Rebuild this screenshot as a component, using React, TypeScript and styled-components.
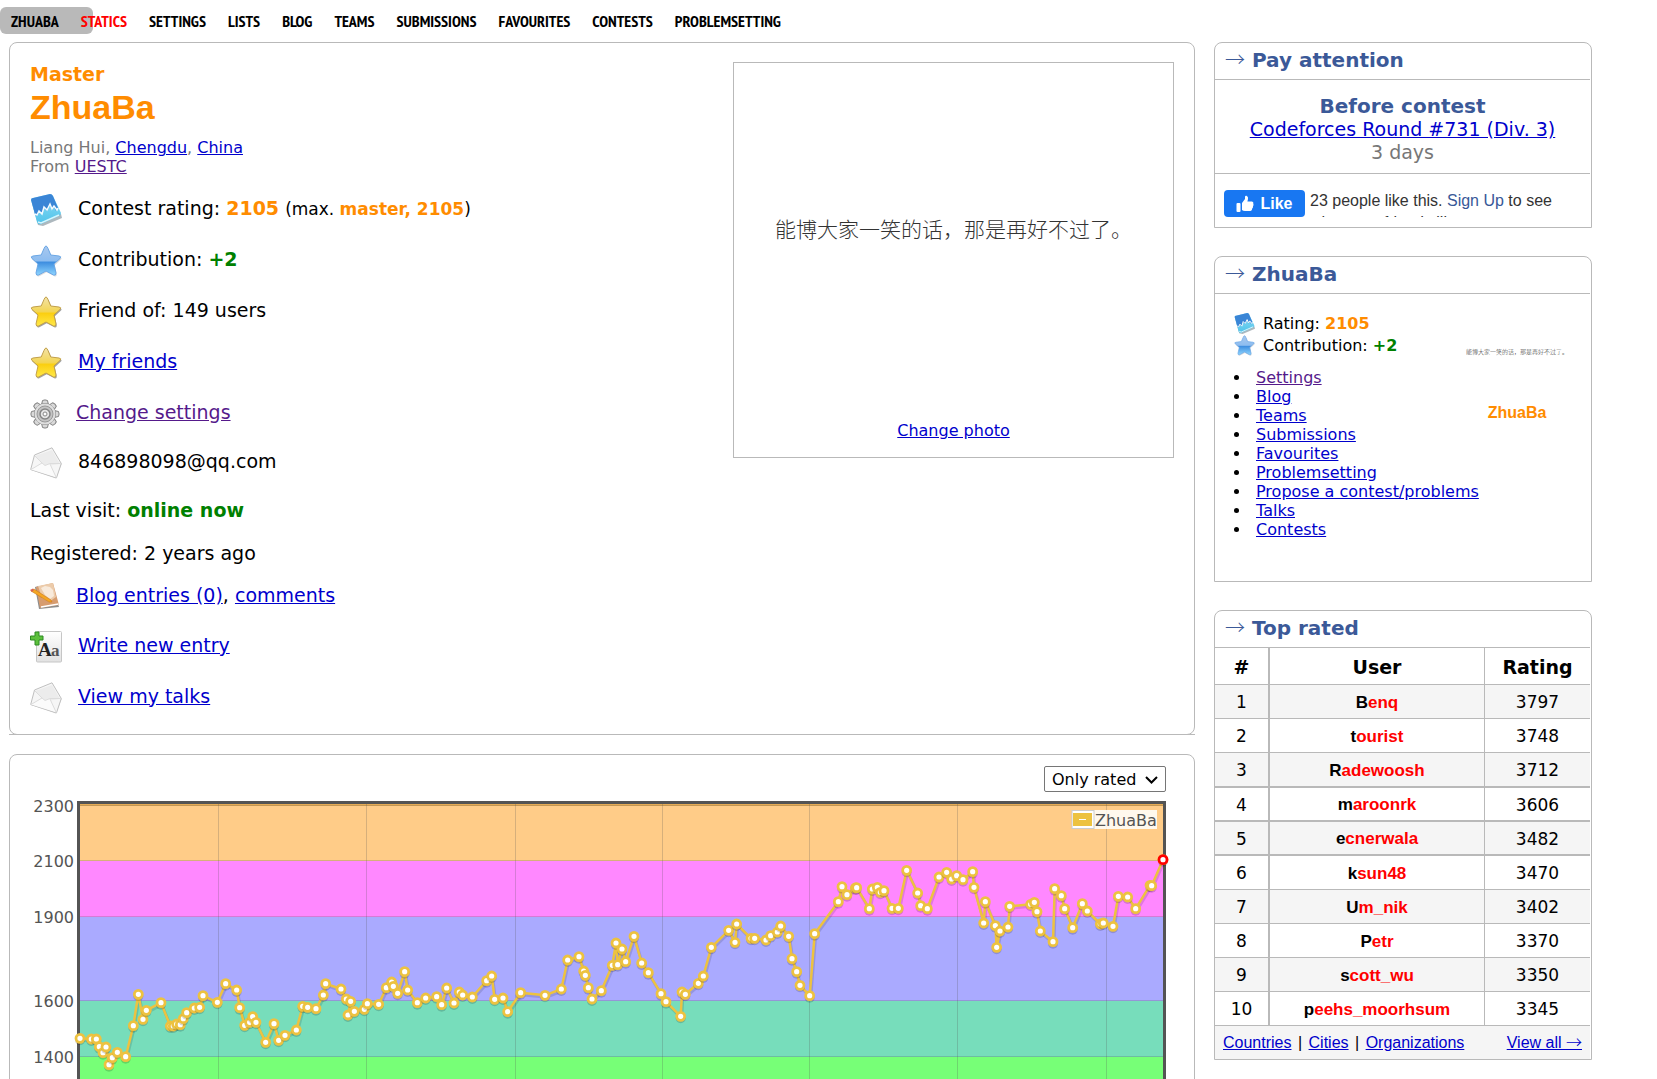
import React from 'react';
import styled, { createGlobalStyle } from 'styled-components';

const LINE = '#b9b9b9';
const LINK = '#0000cc';
const VISITED = '#551a8b';
const ORANGE = '#ff8c00';
const VERDANA = 'Verdana, "DejaVu Sans", sans-serif';
const ARIAL = 'Arial, "Liberation Sans", sans-serif';

const GlobalStyle = createGlobalStyle`
  *, *::before, *::after { box-sizing: border-box; }
  body { margin: 0; background: #fff; color: #000; font-family: ${VERDANA}; font-size: 16px; }
  ul, h1, h2, p { margin: 0; padding: 0; }
`;

const Page = styled.div`
  height: 100vh;
  overflow: hidden;
`;

const Link = styled.a<{ $visited?: boolean }>`
  color: ${(p) => (p.$visited ? VISITED : LINK)};
  text-decoration: underline;
`;

/* ---------- top menu ---------- */

const Nav = styled.nav`
  position: relative;
  display: flex;
  align-items: center;
  gap: 22px;
  height: 42px;
  padding-left: 11px;
`;

const NavMarker = styled.span`
  position: absolute;
  left: 0;
  top: 7px;
  width: 93px;
  height: 27px;
  border-radius: 6px;
  background: ${LINE};
`;

const NavLink = styled.a<{ $hot?: boolean }>`
  position: relative;
  color: ${(p) => (p.$hot ? '#ff0000' : '#000')};
  font: bold 16px/20px "PT Sans Narrow", "Liberation Sans Narrow", "Roboto Condensed", sans-serif;
  text-decoration: none;
  text-transform: uppercase;
`;

/* ---------- page columns ---------- */

const Columns = styled.div`
  display: grid;
  grid-template-columns: minmax(0, 1fr) 378px;
  column-gap: 19px;
  align-items: start;
  padding: 0 65px 0 9px;
`;

const Stack = styled.div<{ $gap: number }>`
  display: flex;
  flex-direction: column;
  gap: ${(p) => p.$gap}px;
`;

const RuledBox = styled.section`
  border-bottom: 1px solid ${LINE};
`;

const ProfileCard = styled.div`
  display: flex;
  justify-content: space-between;
  align-items: flex-start;
  margin-bottom: -1px;
  padding: 19px 20px 13px;
  border: 1px solid ${LINE};
  border-radius: 8px;
`;

const Rank = styled.p`
  color: ${ORANGE};
  font-size: 19px;
  font-weight: bold;
  line-height: 24px;
`;

const Handle = styled.h1`
  color: ${ORANGE};
  font: bold 34px/42px ${ARIAL};
`;

const Details = styled.p`
  padding: 10px 0 6px;
  color: #777;
  font-size: 16px;
  line-height: 19px;
`;

const Fact = styled.div<{ $height: number }>`
  display: flex;
  align-items: center;
  gap: 16px;
  height: ${(p) => p.$height}px;
  font-size: 19px;

  svg { flex: none; margin-top: 4px; }
`;

const Strong = styled.b<{ $color: string }>`
  color: ${(p) => p.$color};
`;

const Small = styled.span`
  font-size: 17px;
`;

const Photo = styled.figure`
  display: flex;
  flex-direction: column;
  align-items: center;
  width: 441px;
  height: 396px;
  margin: 0;
  padding-bottom: 16px;
  border: 1px solid ${LINE};
`;

const PhotoImage = styled.div<{ $size: number; $height: number }>`
  display: flex;
  align-items: center;
  justify-content: center;
  height: ${(p) => p.$height}px;
  color: #333;
  font: 300 ${(p) => p.$size}px/1 "Noto Sans CJK SC", sans-serif;
  white-space: nowrap;
`;

const PhotoCaption = styled.figcaption`
  margin-top: auto;
  line-height: 20px;
`;

/* ---------- rating chart ---------- */

const ChartCard = styled.section`
  display: flex;
  flex-direction: column;
  align-items: flex-end;
  gap: 8px;
  padding: 11px 28px 20px 20px;
  border: 1px solid ${LINE};
  border-radius: 8px;
`;

const FilterBox = styled.div`
  position: relative;
  height: 26px;

  svg { position: absolute; right: 8px; top: 10px; pointer-events: none; }
`;

const Filter = styled.select`
  appearance: none;
  width: 122px;
  height: 26px;
  padding: 0 24px 0 7px;
  border: 1px solid #767676;
  border-radius: 2px;
  background-color: #fff;
  color: #000;
  font: 16px ${VERDANA};
`;

const Chart = styled.svg`
  display: block;
  width: 100%;
  height: auto;
  overflow: visible;
  font: 16px ${VERDANA};
`;

const BANDS = [
  { y: 64, h: 2, color: '#ffbb55' },
  { y: 66, h: 55, color: '#ffcc88' },
  { y: 121, h: 56, color: '#ff88ff' },
  { y: 177, h: 84, color: '#aaaaff' },
  { y: 261, h: 56, color: '#77ddbb' },
  { y: 317, h: 83, color: '#77ff77' },
];
const LEVELS = [
  { label: '2300', y: 66 },
  { label: '2100', y: 121 },
  { label: '1900', y: 177 },
  { label: '1600', y: 261 },
  { label: '1400', y: 317 },
];
const MONTHS = [218, 366, 515, 662, 809, 957, 1106];

// Rating history, three units to one chart pixel.
const HISTORY = `240,895 274,897 289,897 298,920 309,938 318,921 327,974 337,953 352,937 377,950 400,857 415,763
429,838 439,811 483,788 511,858 520,858 530,852 541,854 550,836 560,818 583,804 599,802 609,767 652,787 677,731
710,750 719,803 734,856 749,847 758,830 768,847 797,907 822,851 836,901 855,886 889,870 908,799 923,802 948,806
970,765 977,731 1023,747 1039,777 1052,784 1044,825 1063,814 1093,808 1102,791 1136,793 1159,743 1175,726
1180,739 1193,760 1214,695 1223,750 1252,788 1277,774 1310,770 1325,794 1340,744 1362,789 1378,756 1388,765
1417,771 1460,722 1475,708 1484,778 1509,774 1523,815 1562,758 1635,766 1684,747 1703,660 1737,650 1751,693
1756,706 1765,743 1776,777 1804,752 1837,676 1848,609 1853,674 1866,627 1877,665 1902,589 1925,669 1945,698
1983,761 1998,785 2042,829 2046,756 2056,763 2095,730 2110,708 2134,622 2186,571 2205,607 2210,552 2253,595
2264,595 2298,600 2312,587 2332,576 2342,558 2366,589 2376,656 2390,695 2400,736 2429,767 2444,581 2515,485
2526,440 2541,464 2566,444 2570,443 2608,506 2617,447 2632,442 2641,457 2652,452 2676,505 2695,505 2720,391
2753,459 2762,497 2782,506 2817,411 2840,397 2855,417 2870,407 2889,419 2918,395 2922,442 2951,549 2956,485
2986,557 2990,622 3000,573 3024,561 3029,499 3092,493 3103,487 3111,515 3121,573 3159,605 3164,446 3184,467
3194,506 3218,563 3247,491 3262,513 3301,552 3310,549 3339,559 3355,469 3383,471 3407,506 3450,436 3455,437
3489,359`
  .split(/\s+/)
  .map((pair) => pair.split(',').map((n) => Number(n) / 3));

function RatingChart() {
  const path = HISTORY.map(([x, y]) => `${x.toFixed(1)},${y.toFixed(1)}`).join(' ');
  const last = HISTORY[HISTORY.length - 1];
  return (
    <Chart viewBox="30 60 1136 340" role="img" aria-label="Rating history of ZhuaBa">
      {BANDS.map((b) => (
        <rect key={b.y} x="78" y={b.y} width="1087" height={b.h} fill={b.color} />
      ))}
      <g fill="#545454" fillOpacity="0.24">
        {LEVELS.map((l) => (
          <rect key={l.label} x="80" y={l.y - 1} width="1083" height="1" />
        ))}
        {MONTHS.map((x) => (
          <rect key={x} x={x} y="64" width="1" height="336" />
        ))}
      </g>
      <rect x="80" y="64" width="1083" height="2" fill="#545454" fillOpacity="0.14" />
      <path d="M78.5 400V62.5H1164.5V400" fill="none" stroke="#545454" strokeWidth="3" />
      <g fill="#545454" textAnchor="end">
        {LEVELS.map((l) => (
          <text key={l.label} x="74" y={l.y + 6}>{l.label}</text>
        ))}
      </g>
      <g fill="none" strokeLinejoin="round">
        <polyline points={path} stroke="#000" strokeOpacity="0.12" strokeWidth="3" transform="translate(1 2)" />
        <polyline points={path} stroke="#edc240" strokeWidth="2.5" />
      </g>
      {HISTORY.map(([x, y], i) => (
        <g key={i}>
          <circle cx={x} cy={y + 2} r="5" fill="#000" fillOpacity="0.16" />
          <circle cx={x} cy={y} r="4" fill="#fff" stroke="#edc240" strokeWidth="2.8" />
        </g>
      ))}
      <circle cx={last[0]} cy={last[1]} r="4" fill="#fff" stroke="#f00" strokeWidth="2.8" />
      <rect x="1072" y="70" width="85" height="19" fill="#fff" fillOpacity="0.85" />
      <rect x="1072" y="70.5" width="22" height="18" fill="#fff" stroke="#ccc" />
      <rect x="1073" y="73" width="19" height="13" fill="#edc240" />
      <rect x="1079" y="79" width="7" height="1" fill="#fff" />
      <text x="1095" y="86" fill="#545454">ZhuaBa</text>
    </Chart>
  );
}

/* ---------- sidebar ---------- */

const Panel = styled.section`
  padding-right: 1px;
  border: 1px solid ${LINE};
  border-radius: 8px 8px 0 0;
`;

const PanelTitle = styled.h2`
  height: 37px;
  padding-left: 10px;
  border-bottom: 1px solid ${LINE};
  color: #3b5998;
  font-size: 20px;
  line-height: 34px;
`;

const Arrow = styled.span`
  font-family: "Noto Sans CJK SC", sans-serif;
  font-weight: 300;
  line-height: 1;
`;

const Countdown = styled.div`
  padding: 15px 0 9px;
  border-bottom: 1px solid ${LINE};
  color: #777;
  font-size: 19px;
  line-height: 23px;
  text-align: center;

  strong { display: block; color: #3b5998; font-size: 20px; }
`;

const Social = styled.div`
  display: flex;
  gap: 5px;
  padding: 16px 9px 10px;
`;

const LikeButton = styled.button`
  display: flex;
  flex: none;
  align-items: center;
  justify-content: center;
  gap: 6px;
  width: 81px;
  height: 27px;
  padding: 0;
  border: 0;
  border-radius: 4px;
  background: #1877f2;
  color: #fff;
  font: bold 16px ${ARIAL};
`;

const SocialText = styled.p`
  height: 27px;
  max-width: 260px;
  overflow: hidden;
  color: #333;
  font: 16px/22px ${ARIAL};

  a { color: #385898; text-decoration: none; }
`;

const UserBody = styled.div`
  padding: 8px 22px 42px 0;
`;

const Avatar = styled.div`
  float: right;
  width: 102px;
  text-align: center;
`;

const AvatarName = styled.a`
  display: block;
  color: ${ORANGE};
  font: bold 16px/22px ${ARIAL};
  text-decoration: none;
`;

const Summary = styled.div`
  padding: 10px 0 12px 19px;
`;

const SummaryRow = styled.div`
  display: flex;
  align-items: center;
  gap: 8px;
  height: 22px;

  svg { flex: none; }
`;

const LinkList = styled.ul`
  padding-left: 36px;
  line-height: 19px;

  li { padding-left: 5px; }
`;

const RatingTable = styled.table`
  width: 100%;
  border-spacing: 0;
  table-layout: fixed;
  text-align: center;

  th, td {
    height: 34px;
    padding: 1px 0 0;
    border-bottom: 1px solid ${LINE};
    border-right: 1px solid ${LINE};
  }
  th { height: 37px; padding-top: 2px; font-size: 19px; }
  td { font-size: 17px; }
  th:first-child, td:first-child { width: 55px; border-right-width: 2px; }
  th:last-child, td:last-child { width: 105px; border-right: 0; }
  tbody tr:nth-child(odd) { background: #f5f5f5; }
  tbody tr:nth-child(3) td { height: 35px; }
  tbody tr:nth-child(n + 3):nth-child(-n + 5) td { border-bottom-width: 2px; }
`;

const User = styled.a`
  display: inline-block;
  color: #f00;
  font: bold 17px/20px ${ARIAL};
  text-decoration: none;

  &::first-letter { color: #000; }
`;

const TableFooter = styled.div`
  display: flex;
  justify-content: space-between;
  height: 33px;
  padding: 0 8px;
  background: #f5f5f5;
  font: 16px/33px ${ARIAL};
`;

const Divider = styled.span`
  margin: 0 2px;
`;

/* ---------- icons ---------- */

const RatingIcon = ({ size = 32 }: { size?: number }) => (
  <svg width={size} height={size} viewBox="0 0 32 32" aria-hidden="true">
    <defs>
      <linearGradient id="ice" x1="0" y1="0" x2="0" y2="1">
        <stop offset="0" stopColor="#8fdcf5" />
        <stop offset="1" stopColor="#4fc3ea" />
      </linearGradient>
    </defs>
    <path d="M2 9 8 31 13 32 32 24 31 20Z" fill="#8a9aa2" opacity=".7" />
    <path d="M1 6Q1 4 3 4L20 0Q22 0 23 2L31 19Q31 21 29 22L11 30Q8 31 7 28Z" fill="url(#ice)" />
    <path d="M1 6Q1 4 3 4L20 0Q22 0 23 2L28 14 26 17 24 13 22 16 20 11 17 17 14 14 12 20 9 18 7 22 5 20Z" fill="#3a85d6" />
    <path d="m5 20 2 1 2-4 3 3 2-7 3 3 3-6 2 5 2-3 3 4 1-2" fill="none" stroke="#f4fbff" strokeWidth="1.5" />
    <path d="m8 28 3 1 18-8" fill="none" stroke="#d6f5fd" strokeWidth="1.5" />
  </svg>
);

const STAR = 'M16 1Q17 1 18 3.500L20.800 10 29 11Q32 11.500 30 13.500L24 19 26 28Q26 31 23.500 30L16 26 8.500 30Q6 31 6 28L8 19 2 13.500Q0 11.500 3 11L11.200 10 14 3.500Q15 1 16 1Z';

const StarIcon = ({ blue, size = 32 }: { blue?: boolean; size?: number }) => {
  const id = blue ? 'starBlue' : 'starGold';
  return (
    <svg width={size} height={size} viewBox="0 0 32 32" aria-hidden="true">
      <defs>
        <linearGradient id={id} x1="0" y1="0" x2="0" y2="1">
          <stop offset="0" stopColor={blue ? '#a9c8ee' : '#f3e3a8'} />
          <stop offset=".5" stopColor={blue ? '#8dbdf0' : '#f3d553'} />
          <stop offset=".56" stopColor={blue ? '#3f8fe0' : '#fbcf10'} />
          <stop offset="1" stopColor={blue ? '#8fd6ff' : '#ffe94a'} />
        </linearGradient>
      </defs>
      <path d={STAR} fill="#555" opacity={blue ? 0.2 : 0.55} transform="translate(.8 1.300)" />
      <path d={STAR} fill={`url(#${id})`} stroke={blue ? '#6aa7e6' : '#c2a04a'} strokeWidth="1" />
    </svg>
  );
};

const GearIcon = () => (
  <svg width="30" height="30" viewBox="0 0 30 30" aria-hidden="true">
    <g fill="#d9d9d9" stroke="#848484">
      {[0, 45, 90, 135, 180, 225, 270, 315].map((a) => (
        <path key={a} d="M11.500 6 12.500 1.500Q15 .300 17.500 1.500L18.500 6Z" transform={`rotate(${a} 15 15)`} />
      ))}
      <circle cx="15" cy="15" r="10.500" />
    </g>
    <circle cx="15" cy="15" r="10.500" fill="#dedede" />
    <circle cx="15" cy="15" r="8" fill="#c4c4c4" stroke="#999" />
    <circle cx="15" cy="15" r="5" fill="#e6e6e6" stroke="#858585" strokeWidth="1.500" />
    <circle cx="15" cy="15" r="2" fill="#fff" stroke="#888" />
  </svg>
);

const MailIcon = () => (
  <svg width="32" height="32" viewBox="0 0 32 32" aria-hidden="true">
    <path d="M1 23 26 31.500 31.500 17 30 16Z" fill="#999" opacity=".5" />
    <path d="M.700 22.500 4.500 8 22 .800 31.300 16.500 26.500 30.800Z" fill="#f6f6f6" stroke="#bfbfbf" />
    <path d="M5 9 22 3 30 17 20 18.500 15 19Z" fill="#ececec" />
    <path d="M1 22.500 12 16 15 18.500 20 16.500 26.500 30.500Z" fill="#fbfbfb" />
    <path d="M5 9 12 16 15 18.500 20 16.500 31 16.500M12 16 1 22.500M20 17 26 30" fill="none" stroke="#dcdcdc" />
  </svg>
);

const BlogIcon = () => (
  <svg width="30" height="30" viewBox="0 0 30 30" aria-hidden="true">
    <path d="M5 5 9 27 29 25 28 22 12 24 9 4Z" fill="#8d8d8d" />
    <path d="M6 5 23 1 29 23 10 26Z" fill="#d79c6f" />
    <path d="M8 4 23 1 26 15 19 20 12 16Z" fill="#eccbaa" />
    <path d="M11 6 15 4 20 5 23 8 24 14 20 17 15 13Z" fill="#f8eadb" />
    <path d="M11 25 28.500 22" stroke="#fff" strokeWidth="1.500" />
    <path d="M1 9 4 7 21 18 22 20 19 20Z" fill="#f5a623" stroke="#c9781b" strokeWidth=".600" />
    <path d="M0 8 3 6.500 4 8 2 10Z" fill="#d9634f" />
  </svg>
);

const EntryIcon = () => (
  <svg width="32" height="32" viewBox="0 0 32 32" aria-hidden="true">
    <defs>
      <linearGradient id="sheet" x1="0" y1="0" x2="0" y2="1">
        <stop offset="0" stopColor="#fff" />
        <stop offset="1" stopColor="#e2e2e2" />
      </linearGradient>
    </defs>
    <rect x="6.500" y=".500" width="25" height="30.500" rx="1" fill="url(#sheet)" stroke="#c6c6c6" />
    <text x="8" y="25" fill="#222" fontFamily='"Liberation Serif", serif' fontWeight="bold" fontSize="19">A</text>
    <text x="21" y="25" fill="#555" fontFamily='"Liberation Serif", serif' fontWeight="bold" fontSize="17">a</text>
    <path d="M5 1H9V5H13V9H9V14H5V9H.500V5H5Z" fill="#5cc03c" stroke="#2c8a22" />
  </svg>
);

const ThumbIcon = () => (
  <svg width="18" height="18" viewBox="0 0 18 18" fill="#fff" aria-hidden="true">
    <rect x=".500" y="8" width="4" height="9" rx="1" />
    <path d="M6 8 9 4V2Q9 .500 10.500 .800 12.500 1.500 12 4L11.400 6.500H16Q17.800 7 17.300 8.700 18 10 17 11.200 17.300 12.600 16.200 13.600 16.200 15.800 14.400 16H9Q7 16 6 15Z" />
  </svg>
);

const ChevronIcon = () => (
  <svg width="13" height="8" viewBox="0 0 13 8" fill="none" stroke="#000" strokeWidth="2" aria-hidden="true">
    <path d="m1 1 5.500 5.500L12 1" />
  </svg>
);

/* ---------- content ---------- */

const MENU = ['Zhuaba', 'Statics', 'Settings', 'Lists', 'Blog', 'Teams', 'Submissions', 'Favourites', 'Contests', 'Problemsetting'];
const USER_LINKS = ['Settings', 'Blog', 'Teams', 'Submissions', 'Favourites', 'Problemsetting', 'Propose a contest/problems', 'Talks', 'Contests'];
const TOP: [string, number][] = [
  ['Benq', 3797],
  ['tourist', 3748],
  ['Radewoosh', 3712],
  ['maroonrk', 3606],
  ['ecnerwala', 3482],
  ['ksun48', 3470],
  ['Um_nik', 3402],
  ['Petr', 3370],
  ['scott_wu', 3350],
  ['peehs_moorhsum', 3345],
];
const MOTTO = '能博大家一笑的话，那是再好不过了。';

export default function App() {
  return (
    <Page>
      <GlobalStyle />
      <Nav>
        <NavMarker />
        {MENU.map((item) => (
          <NavLink key={item} href="#" $hot={item === 'Statics'}>{item}</NavLink>
        ))}
      </Nav>
      <Columns>
        <Stack as="main" $gap={19}>
          <RuledBox>
            <ProfileCard>
              <div>
                <Rank>Master</Rank>
                <Handle>ZhuaBa</Handle>
                <Details>
                  Liang Hui, <Link href="#">Chengdu</Link>, <Link href="#">China</Link>
                  <br />
                  From <Link href="#" $visited>UESTC</Link>
                </Details>
                <Fact $height={51}>
                  <RatingIcon />
                  <span>
                    Contest rating: <Strong $color={ORANGE}>2105</Strong>{' '}
                    <Small>(max. <Strong $color={ORANGE}>master, 2105</Strong>)</Small>
                  </span>
                </Fact>
                <Fact $height={51}>
                  <StarIcon blue />
                  <span>Contribution: <Strong $color="green">+2</Strong></span>
                </Fact>
                <Fact $height={51}><StarIcon /><span>Friend of: 149 users</span></Fact>
                <Fact $height={51}><StarIcon /><Link href="#">My friends</Link></Fact>
                <Fact $height={51}><GearIcon /><Link href="#" $visited>Change settings</Link></Fact>
                <Fact $height={48}><MailIcon /><span>846898098@qq.com</span></Fact>
                <Fact $height={50}>
                  <span>Last visit: <Strong $color="green">online now</Strong></span>
                </Fact>
                <Fact $height={35}><span>Registered: 2 years ago</span></Fact>
                <Fact $height={50}>
                  <BlogIcon />
                  <span><Link href="#">Blog entries (0)</Link>, <Link href="#">comments</Link></span>
                </Fact>
                <Fact $height={50}><EntryIcon /><Link href="#">Write new entry</Link></Fact>
                <Fact $height={51}><MailIcon /><Link href="#">View my talks</Link></Fact>
              </div>
              <Photo>
                <PhotoImage $size={21} $height={330}>{MOTTO}</PhotoImage>
                <PhotoCaption><Link href="#">Change photo</Link></PhotoCaption>
              </Photo>
            </ProfileCard>
          </RuledBox>
          <ChartCard>
            <FilterBox>
              <Filter aria-label="Contests shown">
                <option>Only rated</option>
                <option>All</option>
              </Filter>
              <ChevronIcon />
            </FilterBox>
            <RatingChart />
          </ChartCard>
        </Stack>

        <Stack as="aside" $gap={28}>
          <Panel>
            <PanelTitle><Arrow>→</Arrow> Pay attention</PanelTitle>
            <Countdown>
              <strong>Before contest</strong>
              <Link href="#">Codeforces Round #731 (Div. 3)</Link>
              <p>3 days</p>
            </Countdown>
            <Social>
              <LikeButton type="button"><ThumbIcon />Like</LikeButton>
              <SocialText>23 people like this. <a href="#">Sign Up</a> to see what your friends like.</SocialText>
            </Social>
          </Panel>

          <Panel>
            <PanelTitle><Arrow>→</Arrow> ZhuaBa</PanelTitle>
            <UserBody>
              <Avatar>
                <PhotoImage $size={6} $height={100}>{MOTTO}</PhotoImage>
                <AvatarName href="#">ZhuaBa</AvatarName>
              </Avatar>
              <Summary>
                <SummaryRow><RatingIcon size={21} /><span>Rating: <Strong $color={ORANGE}>2105</Strong></span></SummaryRow>
                <SummaryRow><StarIcon blue size={21} /><span>Contribution: <Strong $color="green">+2</Strong></span></SummaryRow>
              </Summary>
              <LinkList>
                {USER_LINKS.map((item) => (
                  <li key={item}><Link href="#" $visited={item === 'Settings'}>{item}</Link></li>
                ))}
              </LinkList>
            </UserBody>
          </Panel>

          <Panel>
            <PanelTitle><Arrow>→</Arrow> Top rated</PanelTitle>
            <RatingTable>
              <thead>
                <tr><th>#</th><th>User</th><th>Rating</th></tr>
              </thead>
              <tbody>
                {TOP.map(([name, rating], i) => (
                  <tr key={name}>
                    <td>{i + 1}</td>
                    <td><User href="#">{name}</User></td>
                    <td>{rating}</td>
                  </tr>
                ))}
              </tbody>
            </RatingTable>
            <TableFooter>
              <span>
                <Link href="#">Countries</Link> <Divider>|</Divider> <Link href="#">Cities</Link>{' '}
                <Divider>|</Divider> <Link href="#">Organizations</Link>
              </span>
              <Link href="#">View all <Arrow>→</Arrow></Link>
            </TableFooter>
          </Panel>
        </Stack>
      </Columns>
    </Page>
  );
}
